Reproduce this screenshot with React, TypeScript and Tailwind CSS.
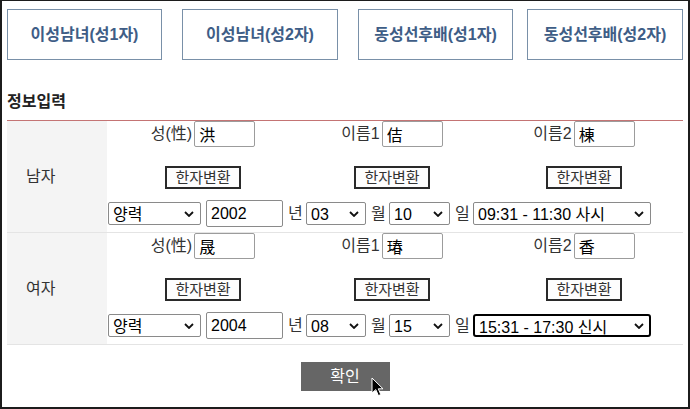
import React from "react";

const NAMES_M = [
  { label: "성(性)", value: "洪" },
  { label: "이름1", value: "佶" },
  { label: "이름2", value: "棟" },
];
const NAMES_F = [
  { label: "성(性)", value: "晟" },
  { label: "이름1", value: "瑃" },
  { label: "이름2", value: "香" },
];

const TABS = [
  { text: "이성남녀(성1자)", cls: "w-[155px]" },
  { text: "이성남녀(성2자)", cls: "w-[156px] ml-[20px]" },
  { text: "동성선후배(성1자)", cls: "w-[155px] ml-[20px]" },
  { text: "동성선후배(성2자)", cls: "w-[156px] ml-[14px]" },
];

function Chevron() {
  return (
    <svg width="10" height="6" viewBox="0 0 10 6" className="pointer-events-none absolute right-[7px] top-1/2 -translate-y-1/2">
      <polyline points="1,1 5,5 9,1" fill="none" stroke="#111" strokeWidth="1.8" />
    </svg>
  );
}

function Select({ value, className, focus }: { value: string; className: string; focus?: boolean }) {
  return (
    <div className={`relative h-[23px] ${className}`}>
      <select
        value={value}
        onChange={() => {}}
        className={`appearance-none w-full h-full bg-white text-[16px] text-black pl-[4px] outline-none ${
          focus ? "border-2 border-black rounded-[3px]" : "border border-[#8a8a8a] rounded-[2px]"
        }`}
      >
        <option>{value}</option>
      </select>
      <Chevron />
    </div>
  );
}

function Unit({ text }: { text: string }) {
  return <span className="ml-[5px] mr-[2px] w-[16px] text-[16px] text-[#333] leading-none">{text}</span>;
}

function Person({
  label,
  names,
  year,
  month,
  day,
  time,
  focus,
}: {
  label: string;
  names: { label: string; value: string }[];
  year: string;
  month: string;
  day: string;
  time: string;
  focus?: boolean;
}) {
  return (
    <div className="flex border-b border-[#e4e4e4]">
      <div className="w-[100px] bg-[#f4f4f4] flex items-center pl-[19px] text-[16px] text-[#333]">{label}</div>
      <div className="flex-1 pb-[5px]">
        <div className="grid grid-cols-[192px_186px_198px] h-[26px]">
          {names.map((n) => (
            <div key={n.label} className="flex items-center justify-center gap-[2px]">
              <span className="text-[16px] text-[#333]">{n.label}</span>
              <input
                value={n.value}
                readOnly
                className="w-[61px] h-[26px] border border-[#9c9c9c] rounded-[2px] pl-[4px] text-[16px] text-black outline-none"
              />
            </div>
          ))}
        </div>
        <div className="grid grid-cols-[192px_186px_198px] mt-[19px]">
          {names.map((n) => (
            <div key={n.label} className="flex justify-center">
              <button className="w-[76px] h-[23px] border-2 border-[#2a2a2a] bg-[#fdfdfd] text-[15px] text-[#333] leading-none">
                한자변환
              </button>
            </div>
          ))}
        </div>
        <div className="flex items-center mt-[11px] h-[27px] pl-[1px]">
          <Select value="양력" className="w-[93px]" />
          <input
            value={year}
            readOnly
            className="ml-[5px] w-[77px] h-[27px] border border-[#8a8a8a] rounded-[2px] pl-[4px] text-[16px] text-black outline-none"
          />
          <Unit text="년" />
          <Select value={month} className="w-[60px]" />
          <Unit text="월" />
          <Select value={day} className="w-[61px]" />
          <Unit text="일" />
          <Select value={time} className="w-[178px]" focus={focus} />
        </div>
      </div>
    </div>
  );
}

export default function App() {
  return (
    <div className="w-[690px] h-[409px] bg-white border-l-2 border-r-2 border-t border-b-2 border-[#1c1c1c] px-[5px] font-['Liberation_Sans','Noto_Sans_CJK_KR',sans-serif] overflow-hidden">
      <div className="flex mt-[8px]">
        {TABS.map((t) => (
          <button
            key={t.text}
            className={`h-[51px] border border-[#7990a8] bg-white text-[16px] font-bold text-[#3e5d86] ${t.cls}`}
          >
            {t.text}
          </button>
        ))}
      </div>

      <h2 className="mt-[32px] h-[20px] leading-[20px] text-[16px] font-bold text-[#222]">정보입력</h2>
      <div className="mt-[8px] h-px bg-[#c47474]" />

      <Person label="남자" names={NAMES_M} year="2002" month="03" day="10" time="09:31 - 11:30 사시" />
      <Person label="여자" names={NAMES_F} year="2004" month="08" day="15" time="15:31 - 17:30 신시" focus />

      <div className="flex justify-center mt-[17px]">
        <button className="relative w-[89px] h-[29px] bg-[#666666] text-white text-[16px]">
          확인
          <svg width="14" height="20" viewBox="0 0 14 20" className="absolute left-[70px] top-[15px]">
            <path d="M1,1 L1,16 L4.8,12.6 L7.4,18.6 L9.8,17.6 L7.3,11.8 L12,11.8 Z" fill="#000" stroke="#fff" strokeWidth="1" />
          </svg>
        </button>
      </div>
    </div>
  );
}
